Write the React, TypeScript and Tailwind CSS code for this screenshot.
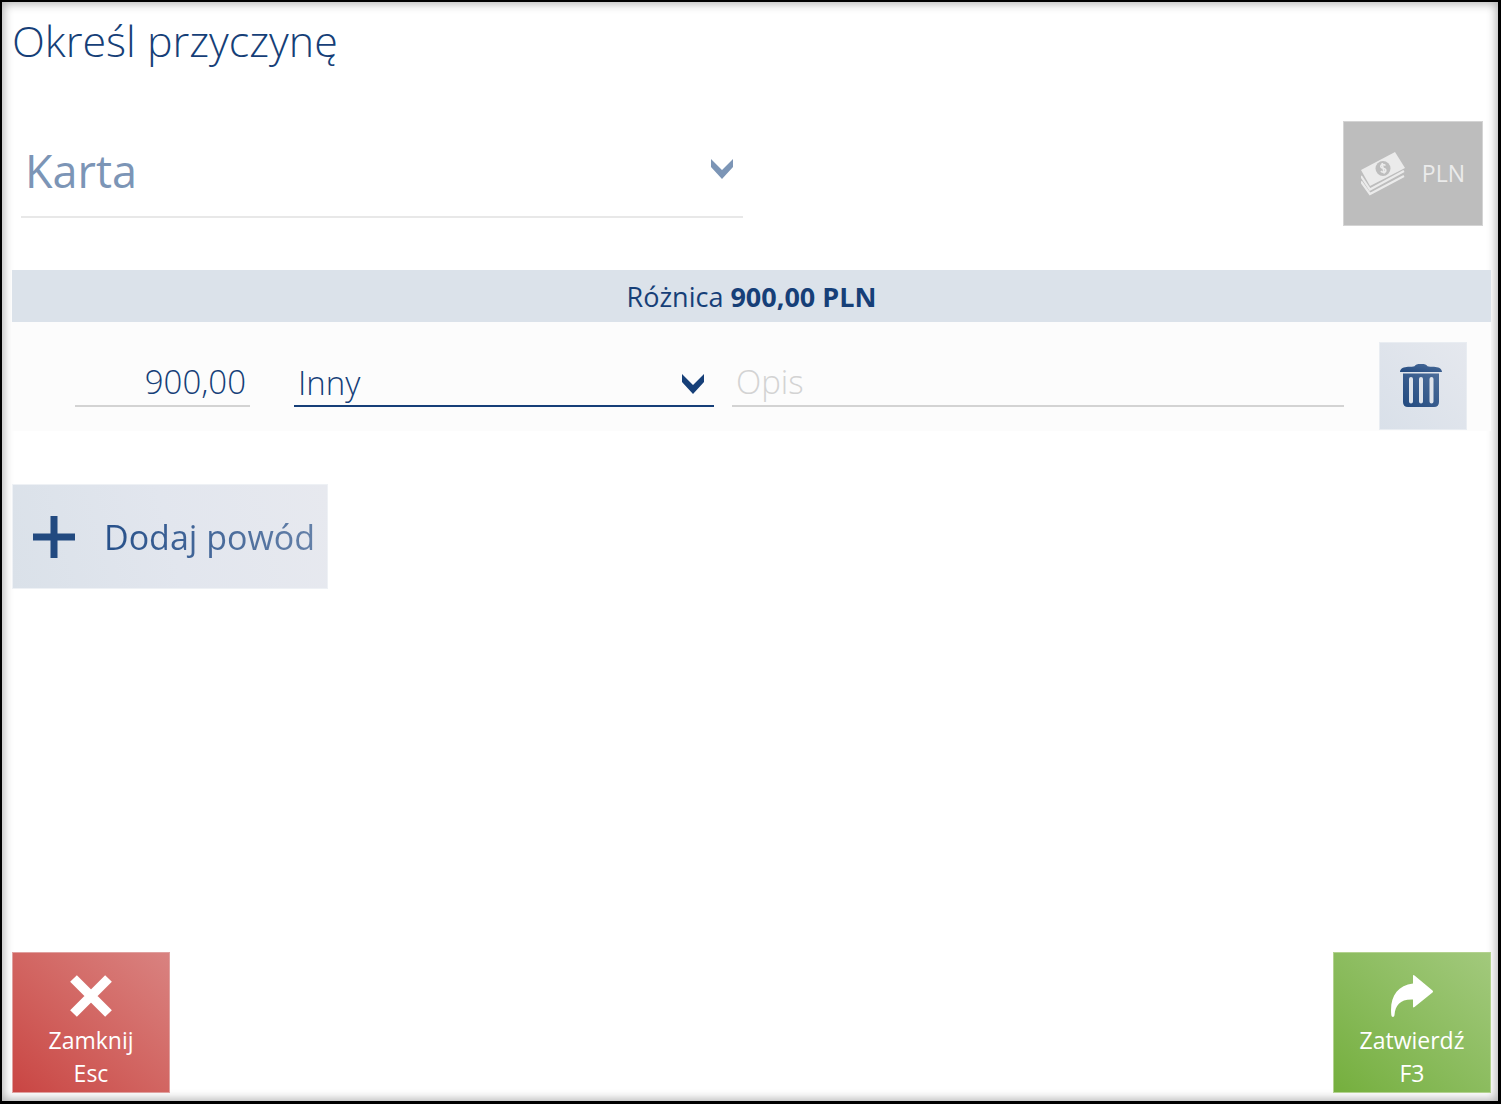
import React from "react";

function Chevron({ className }: { className: string }) {
  return (
    <svg viewBox="0 0 22 20" aria-hidden="true" className={className}>
      <path d="M0 0 11 11 22 0V8L11 20 0 8Z" fill="currentColor" />
    </svg>
  );
}

function CashIcon() {
  return (
    <svg viewBox="0 0 44 44" aria-hidden="true" className="h-11 w-11 shrink-0">
      <path d="M0 18 34 0 44 16 9 34Z" fill="#ebebeb" />
      <path
        d="M0 24 9 37.500 43 19M0 29.500 9 42 43 24"
        fill="none"
        stroke="#ebebeb"
        strokeWidth="2.200"
      />
      <circle cx="22" cy="16.500" r="7.500" fill="#bdbdbd" />
      <path
        d="M24.500 13.500C22 11.500 19 13 20 15.200 21 17 24 15.500 24.700 17.800 25.200 20.500 22 21 19.800 19.200M21 11.200 23.300 21.700"
        fill="none"
        stroke="#ebebeb"
        strokeWidth="1.600"
      />
    </svg>
  );
}

function TrashIcon() {
  return (
    <svg viewBox="0 0 42 43" aria-hidden="true" className="h-[43px] w-[42px]">
      <defs>
        <linearGradient id="trash-fill" x1="0" y1="1" x2="1" y2="0">
          <stop offset="0" stopColor="#224a80" />
          <stop offset="1" stopColor="#4c6d9a" />
        </linearGradient>
      </defs>
      <g fill="url(#trash-fill)">
        <path d="M0 8C0 4.500 4 3 8 2.800 11 2.700 13 2.700 14.500 2.200 15.500 .6 17 0 21 0S26.500 .6 27.500 2.200C29 2.700 31 2.700 34 2.800 38 3 42 4.500 42 8Z" />
        <path
          fillRule="evenodd"
          d="M3 9.500H39V38Q39 43 34 43H8Q3 43 3 38ZM9 15V37.500a2 2 0 0 0 4 0V15a2 2 0 0 0-4 0ZM19 15V37.500a2 2 0 0 0 4 0V15a2 2 0 0 0-4 0ZM29.500 15V37.500a2 2 0 0 0 4 0V15a2 2 0 0 0-4 0Z"
        />
      </g>
    </svg>
  );
}

export default function App() {
  return (
    <main className="flex min-h-screen flex-col border-t-2 border-r-3 border-b-3 border-l-2 border-black bg-white pt-2 pr-[7px] pb-2 pl-[10px] font-['Open_Sans','Noto_Sans',sans-serif] text-[#163f78] shadow-[inset_0_0_10px_2px_rgba(0,0,0,0.3)]">
      <h1 className="text-[43px] leading-[62px] font-light">Określ przyczynę</h1>

      <section className="mt-[49px] flex items-start justify-between pr-2">
        <div className="relative ml-[9px] w-1/2 max-w-[722px]">
          <select
            aria-label="Forma płatności"
            disabled
            className="h-[97px] w-full appearance-none border-b-2 border-[#e8e8e8] bg-transparent pt-1 pr-12 pl-1 text-[45px] text-[#7c95b6] opacity-100"
          >
            <option>Karta</option>
          </select>
          <Chevron className="pointer-events-none absolute top-[38px] right-[10px] h-5 w-[22px] text-[#7c95b6]" />
        </div>
        <button
          type="button"
          disabled
          className="flex h-[105px] w-[140px] items-center justify-between border border-[#d4d4d4] bg-[#bdbdbd] px-[17px] text-[23px] text-[#ebebeb]"
        >
          <CashIcon />
          PLN
        </button>
      </section>

      <section className="mt-11">
        <p className="bg-[#dbe2ea] pt-[2px] text-center text-[27px] leading-[50px]">
          Różnica <strong className="font-bold">900,00 PLN</strong>
        </p>
        <div className="flex h-[109px] items-start bg-[#fcfcfc] pt-5 pr-6 pl-[63px]">
          <input
            aria-label="Kwota"
            defaultValue="900,00"
            className="h-[65px] w-[175px] border-b-2 border-[#d3d3d3] bg-transparent pt-4 pr-1 text-right text-[33px] font-light outline-none"
          />
          <div className="relative ml-11 w-[420px]">
            <select
              aria-label="Powód"
              className="h-[65px] w-full appearance-none border-b-2 border-[#163f78] bg-transparent pt-4 pr-12 pl-1 text-[33px] font-light outline-none"
            >
              <option>Inny</option>
            </select>
            <Chevron className="pointer-events-none absolute top-8 right-[10px] h-5 w-[22px]" />
          </div>
          <input
            aria-label="Opis"
            placeholder="Opis"
            className="ml-[18px] h-[65px] min-w-0 flex-1 border-b-2 border-[#d3d3d3] bg-transparent pt-4 pl-1 text-[33px] font-light outline-none placeholder:text-[#d3d3d3]"
          />
          <button
            type="button"
            aria-label="Usuń"
            className="ml-[35px] flex h-[88px] w-[88px] items-center justify-center border border-[#e9edf2] bg-linear-to-tr from-[#d9e0e9] to-[#e5e8ee] pr-1 pb-[2px]"
          >
            <TrashIcon />
          </button>
        </div>
      </section>

      <button
        type="button"
        className="mt-[53px] flex h-[105px] w-[316px] items-center border border-[#eef1f5] bg-linear-[75deg] from-[#dae1e9] via-[#e2e6ee] to-[#e7e9ef] pl-5 text-[34px]"
      >
        <svg viewBox="0 0 42 42" aria-hidden="true" className="mr-[29px] h-[42px] w-[42px] shrink-0">
          <path d="M17.500 0H24.500V17.500H42V24.500H24.500V42H17.500V24.500H0V17.500H17.500Z" fill="#224a80" />
        </svg>
        <span className="bg-linear-to-r from-[#26508a] to-[#6480a8] bg-clip-text pt-[2px] whitespace-nowrap text-transparent">
          Dodaj powód
        </span>
      </button>

      <footer className="mt-auto flex justify-between text-[23px] leading-[33px] text-white">
        <button
          type="button"
          className="flex h-[141px] w-[158px] flex-col items-center border border-[#e0a09f] bg-linear-to-tr from-[#c94543] to-[#d98280] pt-[22px]"
        >
          <svg viewBox="0 0 42 42" aria-hidden="true" className="mb-[7px] h-[42px] w-[42px] shrink-0">
            <path d="M3.500 3.500 38.500 38.500M38.500 3.500 3.500 38.500" stroke="white" strokeWidth="9.500" />
          </svg>
          <span>Zamknij</span>
          <span>Esc</span>
        </button>
        <button
          type="button"
          className="flex h-[141px] w-[158px] flex-col items-center border border-[#b3d28f] bg-linear-to-tr from-[#75af3d] to-[#a2c97c] pt-[22px]"
        >
          <svg viewBox="0 0 42 42" aria-hidden="true" className="mb-[7px] h-[42px] w-[42px] shrink-0">
            <path
              d="M22 1Q22-.5 23.500 .5L41.500 15.500Q42.500 16.500 41.500 17.500L23.500 32Q22 33 22 31.500V24.500C9 24 4.500 30 3.500 40 3.300 42.500 .6 42.500 .3 40 -1.500 22 6 10.500 22 8.500Z"
              fill="white"
            />
          </svg>
          <span>Zatwierdź</span>
          <span>F3</span>
        </button>
      </footer>
    </main>
  );
}
